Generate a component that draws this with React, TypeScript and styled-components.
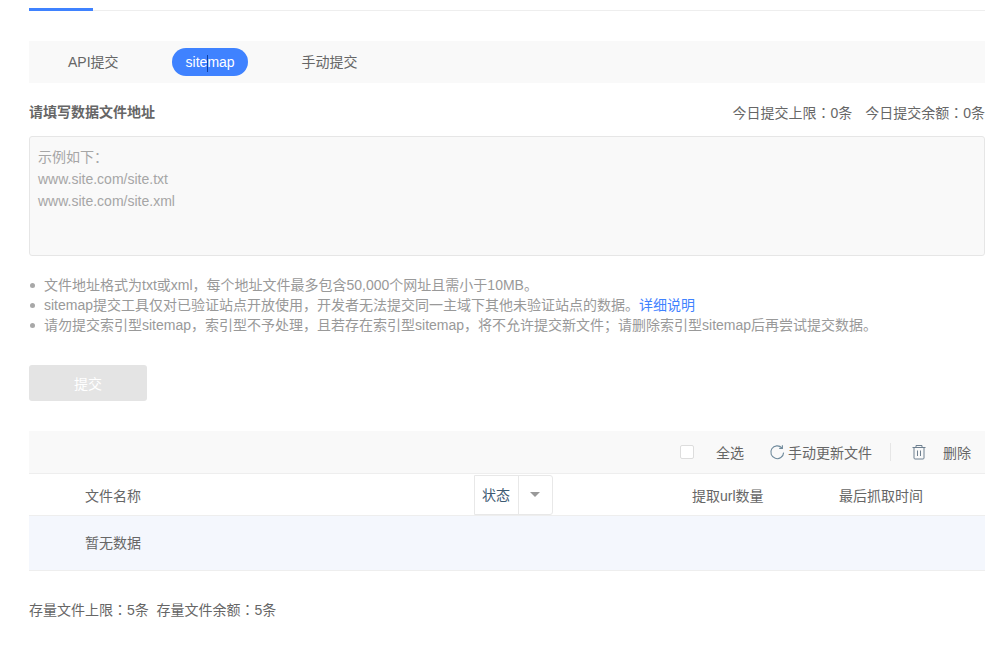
import React from 'react'
import styled, { createGlobalStyle } from 'styled-components'

const pop = '#3f82ff'
const panel = '#f9f9f9'
const line = '#eeeeee'
const text = '#666666'

const GlobalStyle = createGlobalStyle`
  html, body {
    margin: 0;
    padding: 0;
    background: #fff;
    font-family: "Liberation Sans", "Noto Sans CJK SC", sans-serif;
    font-size: 14px;
    color: ${text};
  }
`

const Page = styled.div`
  width: 956px;
  margin-left: 29px;
  height: 645px;
  overflow: hidden;
`

const TopTabs = styled.div`
  height: 10px;
  border-bottom: 1px solid ${line};
  display: flex;
  align-items: flex-end;
`

const ActiveTabBar = styled.div`
  width: 64px;
  height: 3px;
  background: ${pop};
  margin-bottom: -1px;
`

const SubNav = styled.div`
  margin-top: 30px;
  height: 42px;
  background: ${panel};
  display: flex;
  align-items: center;
  padding-left: 25.5px;
`

const SubTab = styled.div<{ $active?: boolean }>`
  height: 28px;
  line-height: 28px;
  padding: 0 13.5px;
  border-radius: 14px;
  margin-right: 40px;
  background: ${({ $active }) => ($active ? pop : 'transparent')};
  color: ${({ $active }) => ($active ? '#fff' : text)};
`

const Caret = styled.span`
  display: inline-block;
  width: 1px;
  height: 17px;
  margin: 0 -1px 0 0;
  background: #0f3f9e;
  vertical-align: middle;
`

const FormHead = styled.div`
  margin-top: 19px;
  height: 20px;
  line-height: 20px;
  display: flex;
  justify-content: space-between;
`

const FormTitle = styled.div`
  font-weight: 700;
`

const Quota = styled.span`
  margin-left: 13px;
`

const Colon = styled.span`
  font-family: "Noto Sans CJK TC", sans-serif;
`

const AddressBox = styled.textarea`
  display: block;
  box-sizing: border-box;
  width: 100%;
  height: 120px;
  margin-top: 14px;
  padding: 9px 9px 9px 8px;
  background: ${panel};
  border: 1px solid #e6e6e6;
  border-radius: 3px;
  resize: none;
  outline: none;
  font: inherit;
  line-height: 22px;
  &::placeholder {
    color: #a6a6a6;
    opacity: 1;
  }
`

const Notes = styled.ul`
  margin: 19px 0 0;
  padding: 0 0 0 1px;
  list-style: none;
  color: #999999;
  line-height: 20px;
`

const Note = styled.li`
  height: 20px;
  &::before {
    content: '';
    display: inline-block;
    width: 5px;
    height: 5px;
    border-radius: 50%;
    background: #a8a8a8;
    margin-right: 9px;
    vertical-align: 2px;
  }
`

const NoteLink = styled.a`
  color: ${pop};
  text-decoration: none;
`

const SubmitButton = styled.button`
  display: block;
  width: 118px;
  height: 36px;
  margin-top: 30px;
  border: none;
  border-radius: 3px;
  background: #e4e4e4;
  color: #fff;
  font: inherit;
`

const Toolbar = styled.div`
  margin-top: 30px;
  height: 42px;
  background: ${panel};
  border-bottom: 1px solid ${line};
  display: flex;
  align-items: center;
  justify-content: flex-end;
  padding-right: 14px;
`

const CheckBox = styled.span`
  box-sizing: border-box;
  width: 14px;
  height: 14px;
  border: 1px solid #dddddd;
  border-radius: 2px;
  background: #fff;
  margin-right: 22px;
`

const ToolAction = styled.span`
  display: flex;
  align-items: center;
  color: ${text};
`

const SelectAll = styled(ToolAction)`
  margin-right: 25px;
`

const ToolDivider = styled.span`
  width: 1px;
  height: 18px;
  background: #e6e6e6;
  margin: 0 21px 0 18px;
`

const ToolIcon = styled.svg<{ $gap: number }>`
  display: block;
  flex: none;
  margin-right: ${({ $gap }) => $gap}px;
`

const HeadRow = styled.div`
  height: 41px;
  border-bottom: 1px solid ${line};
  display: grid;
  grid-template-columns: 445px 218px 147px 1fr;
  align-items: center;
`

const HeadCell = styled.div<{ $indent?: number }>`
  padding-left: ${({ $indent = 0 }) => $indent}px;
`

const StatusSelect = styled.div`
  box-sizing: border-box;
  width: 79px;
  height: 40px;
  border: 1px solid #e8e8e8;
  border-radius: 0 3px 3px 0;
  background: #fff;
  display: flex;
  align-items: center;
`

const StatusLabel = styled.div`
  width: 44px;
  height: 100%;
  line-height: 38px;
  padding-left: 7px;
  box-sizing: border-box;
  border-right: 1px solid #e8e8e8;
  color: #3d5a73;
`

const SelectArrow = styled.div`
  margin-left: 11px;
  width: 0;
  height: 0;
  border-left: 5px solid transparent;
  border-right: 5px solid transparent;
  border-top: 5px solid #999999;
`

const EmptyRow = styled.div`
  height: 54px;
  line-height: 54px;
  padding-left: 56px;
  background: #f4f7fd;
  border-bottom: 1px solid ${line};
`

const Footer = styled.div`
  margin-top: 28px;
  line-height: 20px;
  white-space: pre;
`

export default function App() {
  return (
    <>
      <GlobalStyle />
      <Page>
        <TopTabs>
          <ActiveTabBar />
        </TopTabs>
        <SubNav>
          <SubTab>API提交</SubTab>
          <SubTab $active>
            site<Caret />map
          </SubTab>
          <SubTab>手动提交</SubTab>
        </SubNav>
        <FormHead>
          <FormTitle>请填写数据文件地址</FormTitle>
          <div>
            <Quota>今日提交上限<Colon>：</Colon>0条</Quota>
            <Quota>今日提交余额<Colon>：</Colon>0条</Quota>
          </div>
        </FormHead>
        <AddressBox placeholder={'示例如下：\nwww.site.com/site.txt\nwww.site.com/site.xml'} />
        <Notes>
          <Note>文件地址格式为txt或xml，每个地址文件最多包含50,000个网址且需小于10MB。</Note>
          <Note>
            sitemap提交工具仅对已验证站点开放使用，开发者无法提交同一主域下其他未验证站点的数据。
            <NoteLink href="#">详细说明</NoteLink>
          </Note>
          <Note>请勿提交索引型sitemap，索引型不予处理，且若存在索引型sitemap，将不允许提交新文件；请删除索引型sitemap后再尝试提交数据。</Note>
        </Notes>
        <SubmitButton>提交</SubmitButton>
        <Toolbar>
          <CheckBox />
          <SelectAll>全选</SelectAll>
          <ToolAction>
            <ToolIcon $gap={3} width="16" height="16" viewBox="0 0 16 16" fill="none" stroke="#6f8a9c" strokeWidth="1.1">
              <path d="M12.9 3.9A6.4 6.4 0 1 0 14.6 8.6" />
              <path d="M13.4 1.2v3.2h-3.2" />
            </ToolIcon>
            手动更新文件
          </ToolAction>
          <ToolDivider />
          <ToolAction>
            <ToolIcon $gap={17} width="14" height="16" viewBox="0 0 14 16" fill="none" stroke="#6f8090" strokeWidth="1">
              <path d="M0.5 3.5h13M4 3.5V1.5h6v2M2 3.5v10.5a1 1 0 0 0 1 1h8a1 1 0 0 0 1-1V3.5M5.5 6.5v5.5M8.5 6.5v5.5" />
            </ToolIcon>
            删除
          </ToolAction>
        </Toolbar>
        <HeadRow>
          <HeadCell $indent={56}>文件名称</HeadCell>
          <StatusSelect>
            <StatusLabel>状态</StatusLabel>
            <SelectArrow />
          </StatusSelect>
          <HeadCell>提取url数量</HeadCell>
          <HeadCell>最后抓取时间</HeadCell>
        </HeadRow>
        <EmptyRow>暂无数据</EmptyRow>
        <Footer>存量文件上限<Colon>：</Colon>5条  存量文件余额<Colon>：</Colon>5条</Footer>
      </Page>
    </>
  )
}
